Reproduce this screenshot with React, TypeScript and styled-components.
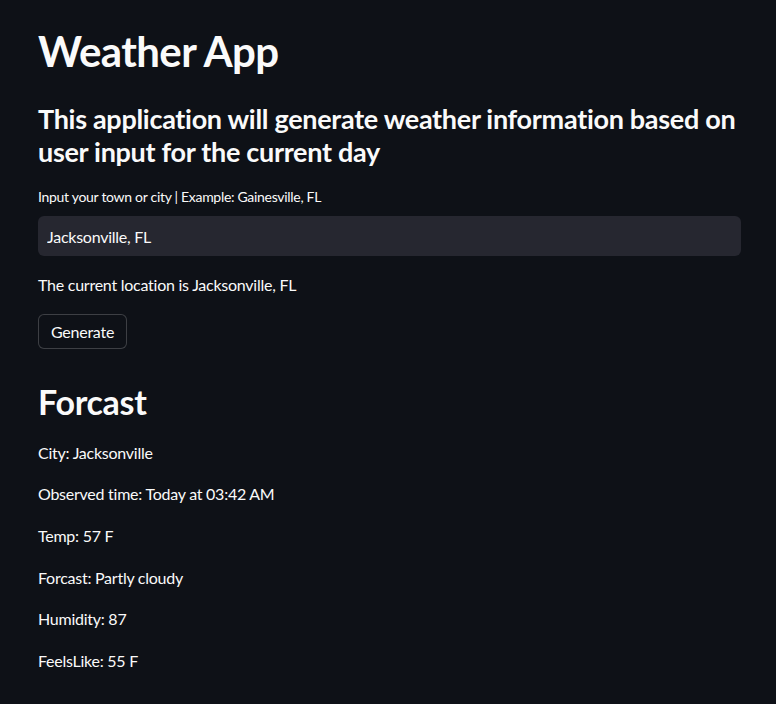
import React from "react";
import styled, { createGlobalStyle } from "styled-components";

const GlobalStyle = createGlobalStyle`
  html, body {
    margin: 0;
    padding: 0;
    background: #0e1117;
    color: #fafafa;
    font-family: Lato, "Noto Sans", sans-serif;
  }
  * {
    box-sizing: border-box;
  }
`;

const Main = styled.main`
  min-height: 704px;
  padding: 24px 35px 40px 38px;
  display: flex;
  flex-direction: column;
`;

const Title = styled.h1`
  margin: 0;
  padding: 2px 0 22px;
  font-size: 42px;
  font-weight: 700;
  line-height: 1.2;
  letter-spacing: -0.6px;
`;

const Subtitle = styled.h3`
  margin: 0;
  padding: 4px 0 19px;
  font-size: 27px;
  font-weight: 700;
  line-height: 33px;
  letter-spacing: -0.3px;
`;

const Header = styled.h2`
  margin: 0;
  padding: 13px 0 17px;
  font-size: 34px;
  font-weight: 700;
  line-height: 1.2;
  letter-spacing: -0.3px;
`;

const Label = styled.label`
  display: block;
  font-size: 14px;
  line-height: 20px;
  margin-bottom: 9px;
  letter-spacing: -0.3px;
`;

const TextInput = styled.input`
  display: block;
  width: 100%;
  height: 40px;
  padding: 0 9px;
  border: none;
  border-radius: 6px;
  background: #262730;
  color: #fafafa;
  font-family: inherit;
  font-size: 16px;
  letter-spacing: -0.25px;
  outline: none;
`;

const Field = styled.div`
  margin-bottom: 16px;
`;

const Text = styled.p`
  margin: 0 0 16px;
  font-size: 16px;
  line-height: 1.6;
  letter-spacing: -0.25px;
`;

const Button = styled.button`
  align-self: flex-start;
  height: 35px;
  padding: 0 12px;
  margin-bottom: 20px;
  background: #0e1117;
  color: #fafafa;
  border: 1px solid rgba(250, 250, 250, 0.2);
  border-radius: 6px;
  font-family: inherit;
  font-size: 16px;
  letter-spacing: -0.25px;
`;

const forecast = [
  "City: Jacksonville",
  "Observed time: Today at 03:42 AM",
  "Temp: 57 F",
  "Forcast: Partly cloudy",
  "Humidity: 87",
  "FeelsLike: 55 F",
];

export default function App() {
  return (
    <>
      <GlobalStyle />
      <Main>
        <Title>Weather App</Title>
        <Subtitle>
          This application will generate weather information based on user input for the current day
        </Subtitle>
        <Field>
          <Label htmlFor="town">Input your town or city | Example: Gainesville, FL</Label>
          <TextInput id="town" defaultValue="Jacksonville, FL" />
        </Field>
        <Text>The current location is Jacksonville, FL</Text>
        <Button>Generate</Button>
        <Header>Forcast</Header>
        {forecast.map((line) => (
          <Text key={line}>{line}</Text>
        ))}
      </Main>
    </>
  );
}
